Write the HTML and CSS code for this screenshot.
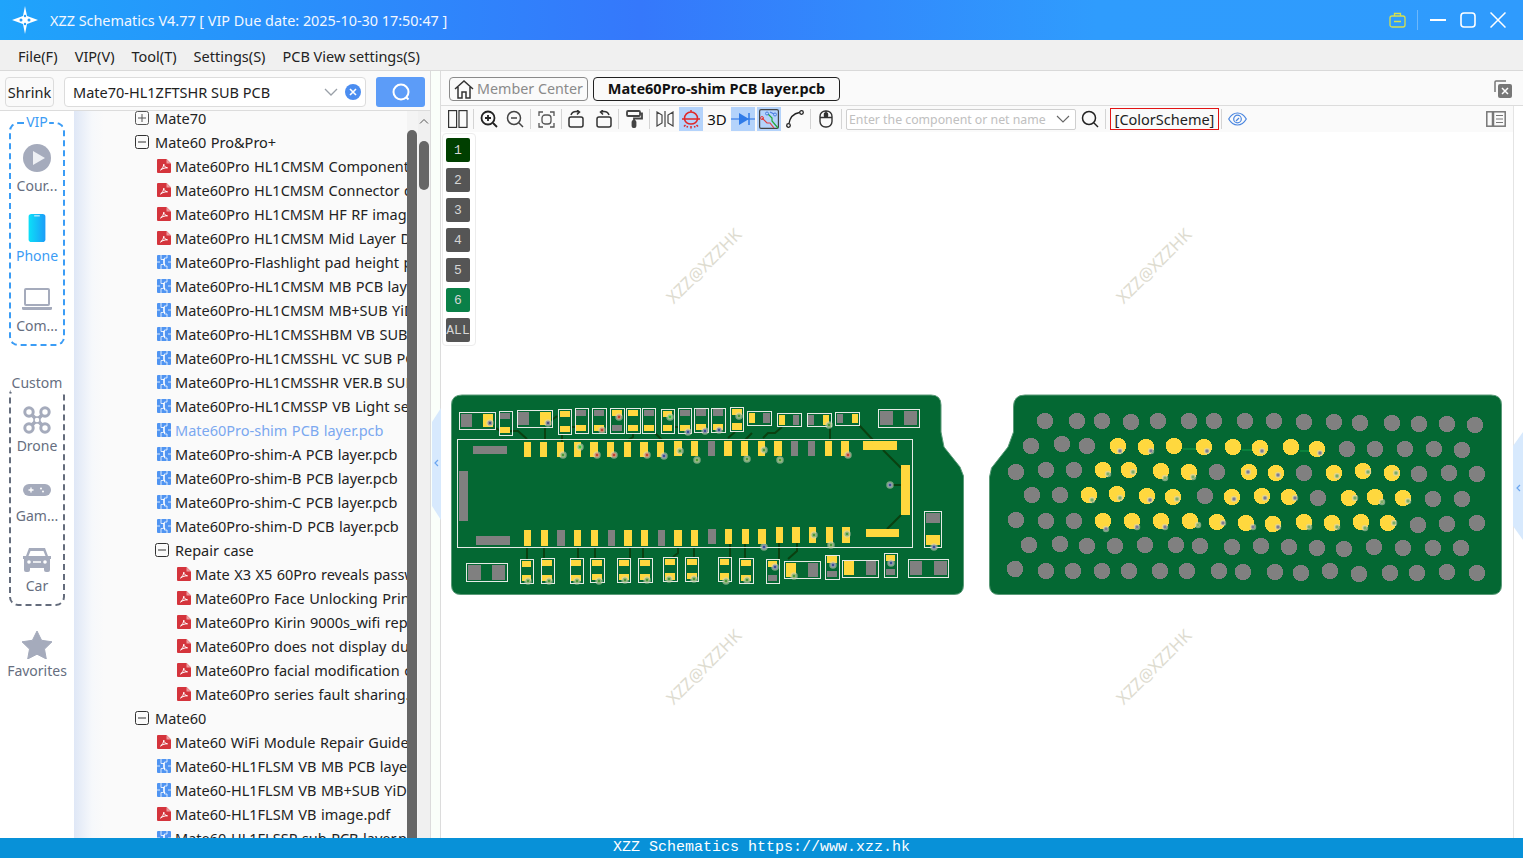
FILE: index.html
```html
<!DOCTYPE html>
<html lang="en">
<head>
<meta charset="utf-8">
<title>XZZ Schematics</title>
<link rel="stylesheet" href="styles.css">
</head>
<body>
<svg class="defs" width="0" height="0" aria-hidden="true">
  <symbol id="i-pdf" viewBox="0 0 14 14">
    <path d="M1 0h8.500L14 4.500V13a1 1 0 0 1-1 1H1a1 1 0 0 1-1-1V1a1 1 0 0 1 1-1z" fill="#d4343c"/>
    <path d="M9.500 0v4.500H14z" fill="#ee9a9e"/>
    <path d="M3.500 11c1.700-1 3-3.300 3.300-5.800.3 2 1.400 3.300 3.700 3.600-2.200-.1-4.900.6-7 2.200z" fill="none" stroke="#fff" stroke-width="1"/>
  </symbol>
  <symbol id="i-pcb" viewBox="0 0 14 14">
    <rect width="14" height="14" rx="1" fill="#4f94f2"/>
    <path d="M4 0v4.500h2.500v5H4V14M10 0v3H7.500v8H10v3M0 7h3M11 7h3" fill="none" stroke="#fff" stroke-width=".8"/>
    <circle cx="6.500" cy="4.500" r=".8" fill="#fff"/><circle cx="7.500" cy="9.500" r=".8" fill="#fff"/>
  </symbol>
  <symbol id="i-plus" viewBox="0 0 14 14">
    <rect x=".5" y=".5" width="13" height="13" rx="2" fill="none" stroke="#555"/>
    <path d="M3 7h8M7 3v8" stroke="#555"/>
  </symbol>
  <symbol id="i-minus" viewBox="0 0 14 14">
    <rect x=".5" y=".5" width="13" height="13" rx="2" fill="none" stroke="#333"/>
    <path d="M3 7h8" stroke="#333"/>
  </symbol>
</svg>

<header class="titlebar">
  <svg class="logo" width="26" height="28" viewBox="0 0 26 28">
    <path d="M13 0l2 10 11 4-11 4-2 10-2-10-11-4 11-4z" fill="#fff"/>
    <circle cx="9" cy="14" r="1.500" fill="#2a9cf6"/><circle cx="17" cy="14" r="1.500" fill="#2a9cf6"/>
    <circle cx="13" cy="10" r="1.200" fill="#2a9cf6"/><circle cx="13" cy="18" r="1.200" fill="#2a9cf6"/>
  </svg>
  <span class="apptitle">XZZ Schematics V4.77 [ VIP Due date: 2025-10-30 17:50:47 ]</span>
  <div class="winbtns">
    <svg class="brief" width="17" height="16" viewBox="0 0 17 16" fill="none" stroke="#d8e04c" stroke-width="1.300"><rect x="1" y="4" width="15" height="11" rx="2"/><path d="M5.500 4V1.500h6V4M5 9.500h7" /></svg>
    <span class="winsep"></span>
    <svg width="16" height="16" viewBox="0 0 16 16"><path d="M0 8h16" stroke="#fff" stroke-width="2"/></svg>
    <svg width="16" height="16" viewBox="0 0 16 16"><rect x="1" y="1" width="14" height="14" rx="3" fill="none" stroke="#fff" stroke-width="1.600"/></svg>
    <svg width="16" height="16" viewBox="0 0 16 16"><path d="M.5.500l15 15M15.500.500l-15 15" stroke="#fff" stroke-width="1.500"/></svg>
  </div>
</header>

<nav class="menubar">
  <span>File(F)</span><span>VIP(V)</span><span>Tool(T)</span><span>Settings(S)</span><span>PCB View settings(S)</span>
</nav>

<div class="main">
  <section class="leftpane">
    <div class="searchrow">
      <button class="shrink">Shrink</button>
      <div class="combo">
        <span class="combotext">Mate70-HL1ZFTSHR SUB PCB</span>
        <svg width="14" height="8" viewBox="0 0 14 8"><path d="M1 1l6 6 6-6" fill="none" stroke="#9aa0a8" stroke-width="1.300"/></svg>
        <svg width="16" height="16" viewBox="0 0 16 16"><circle cx="8" cy="8" r="8" fill="#4b8df0"/><path d="M5 5l6 6M11 5l-6 6" stroke="#fff" stroke-width="1.600"/></svg>
      </div>
      <button class="searchbtn" aria-label="Search"><svg width="20" height="20" viewBox="0 0 20 20" fill="none" stroke="#fff" stroke-width="2"><circle cx="10" cy="10" r="7.500"/><path d="M15.500 15.500l2 2"/></svg></button>
    </div>
    <div class="leftbody">
      <aside class="rail">
        <div class="group group-vip">
          <span class="legend legend-vip">VIP</span>
          <div class="railitem"><svg width="28" height="28" viewBox="0 0 28 28"><circle cx="14" cy="14" r="14" fill="#a5abbc"/><path d="M10 7l12 7-12 7z" fill="#eef0f4"/></svg><span>Cour...</span></div>
          <div class="railitem railitem-on"><svg width="18" height="30" viewBox="0 0 18 30"><defs><linearGradient id="ph" x1="0" x2="1" y1="0" y2="0"><stop offset="0" stop-color="#0ce0f8"/><stop offset="1" stop-color="#1c9cf8"/></linearGradient></defs><rect width="18" height="30" rx="3" fill="url(#ph)"/><path d="M6 2h6" stroke="#fff" stroke-width="1"/></svg><span>Phone</span></div>
          <div class="railitem"><svg width="30" height="28" viewBox="0 0 30 28"><rect x="3" y="5" width="24" height="16" rx="1" fill="none" stroke="#a5abbc" stroke-width="2"/><path d="M0 23h30v1.500a1.500 1.500 0 0 1-1.500 1.500h-27A1.500 1.500 0 0 1 0 24.500z" fill="#a5abbc"/></svg><span>Com...</span></div>
        </div>
        <div class="group group-custom">
          <span class="legend legend-custom">Custom</span>
          <div class="railitem"><svg width="28" height="28" viewBox="0 0 28 28" fill="none" stroke="#a5abbc"><path d="M7 7l14 14M21 7L7 21" stroke-width="3.600"/><circle cx="6" cy="6" r="4.200" stroke-width="3" fill="#fff"/><circle cx="22" cy="6" r="4.200" stroke-width="3" fill="#fff"/><circle cx="6" cy="22" r="4.200" stroke-width="3" fill="#fff"/><circle cx="22" cy="22" r="4.200" stroke-width="3" fill="#fff"/><circle cx="14" cy="14" r="3" fill="#fff" stroke-width="1.500"/></svg><span>Drone</span></div>
          <div class="railitem"><svg width="28" height="28" viewBox="0 0 28 28"><rect y="8" width="28" height="12" rx="6" fill="#a5abbc"/><path d="M5.500 14h5M8 11.500v5" stroke="#fff" stroke-width="1.300"/><circle cx="18" cy="12.500" r="1" fill="#fff"/><circle cx="20" cy="15.500" r="1" fill="#fff"/></svg><span>Gam...</span></div>
          <div class="railitem"><svg width="28" height="28" viewBox="0 0 28 28"><path d="M6 2h16l3 8h3v3h-1v11a2 2 0 0 1-2 2h-2a2 2 0 0 1-2-2v-2H7v2a2 2 0 0 1-2 2H3a2 2 0 0 1-2-2V13H0v-3h3z" fill="#a5abbc"/><path d="M7.500 5h13l2 5H5.500z" fill="#fff"/><circle cx="6" cy="16" r="1.800" fill="#fff"/><circle cx="22" cy="16" r="1.800" fill="#fff"/><path d="M10 16h8" stroke="#fff" stroke-width="1.500"/></svg><span>Car</span></div>
        </div>
        <div class="railitem railitem-fav"><svg width="30" height="28" viewBox="0 0 30 28"><path d="M15 0l4.600 9.300 10.400 1.500-7.500 7.300 1.800 9.900-9.300-4.800-9.300 4.800 1.800-9.900L0 10.800l10.400-1.500z" fill="#a5abbc" stroke="#a5abbc" stroke-linejoin="round"/></svg><span>Favorites</span></div>
      </aside>
      <div class="tree">
        <ul class="treelist">
          <li class="l1"><svg class="ic"><use href="#i-plus"/></svg>Mate70</li>
          <li class="l1"><svg class="ic"><use href="#i-minus"/></svg>Mate60 Pro&amp;Pro+</li>
          <li class="l2"><svg class="ic"><use href="#i-pdf"/></svg>Mate60Pro HL1CMSM Component diagram.pdf</li>
          <li class="l2"><svg class="ic"><use href="#i-pdf"/></svg>Mate60Pro HL1CMSM Connector diagram.pdf</li>
          <li class="l2"><svg class="ic"><use href="#i-pdf"/></svg>Mate60Pro HL1CMSM HF RF image.pdf</li>
          <li class="l2"><svg class="ic"><use href="#i-pdf"/></svg>Mate60Pro HL1CMSM Mid Layer Diagram.pdf</li>
          <li class="l2"><svg class="ic"><use href="#i-pcb"/></svg>Mate60Pro-Flashlight pad height pcb layer.pcb</li>
          <li class="l2"><svg class="ic"><use href="#i-pcb"/></svg>Mate60Pro-HL1CMSM MB PCB layer.pcb</li>
          <li class="l2"><svg class="ic"><use href="#i-pcb"/></svg>Mate60Pro-HL1CMSM MB+SUB YiDing.pcb</li>
          <li class="l2"><svg class="ic"><use href="#i-pcb"/></svg>Mate60Pro-HL1CMSSHBM VB SUB PCB layer.pcb</li>
          <li class="l2"><svg class="ic"><use href="#i-pcb"/></svg>Mate60Pro-HL1CMSSHL VC SUB PCB layer.pcb</li>
          <li class="l2"><svg class="ic"><use href="#i-pcb"/></svg>Mate60Pro-HL1CMSSHR VER.B SUB PCB layer.pcb</li>
          <li class="l2"><svg class="ic"><use href="#i-pcb"/></svg>Mate60Pro-HL1CMSSP VB Light sensor layer.pcb</li>
          <li class="l2 sel"><svg class="ic"><use href="#i-pcb"/></svg>Mate60Pro-shim PCB layer.pcb</li>
          <li class="l2"><svg class="ic"><use href="#i-pcb"/></svg>Mate60Pro-shim-A PCB layer.pcb</li>
          <li class="l2"><svg class="ic"><use href="#i-pcb"/></svg>Mate60Pro-shim-B PCB layer.pcb</li>
          <li class="l2"><svg class="ic"><use href="#i-pcb"/></svg>Mate60Pro-shim-C PCB layer.pcb</li>
          <li class="l2"><svg class="ic"><use href="#i-pcb"/></svg>Mate60Pro-shim-D PCB layer.pcb</li>
          <li class="l2b"><svg class="ic"><use href="#i-minus"/></svg>Repair case</li>
          <li class="l3"><svg class="ic"><use href="#i-pdf"/></svg>Mate X3 X5 60Pro reveals password.pdf</li>
          <li class="l3"><svg class="ic"><use href="#i-pdf"/></svg>Mate60Pro Face Unlocking Principle.pdf</li>
          <li class="l3"><svg class="ic"><use href="#i-pdf"/></svg>Mate60Pro Kirin 9000s_wifi repair.pdf</li>
          <li class="l3"><svg class="ic"><use href="#i-pdf"/></svg>Mate60Pro does not display during.pdf</li>
          <li class="l3"><svg class="ic"><use href="#i-pdf"/></svg>Mate60Pro facial modification cases.pdf</li>
          <li class="l3"><svg class="ic"><use href="#i-pdf"/></svg>Mate60Pro series fault sharing.pdf</li>
          <li class="l1"><svg class="ic"><use href="#i-minus"/></svg>Mate60</li>
          <li class="l2"><svg class="ic"><use href="#i-pdf"/></svg>Mate60 WiFi Module Repair Guide.pdf</li>
          <li class="l2"><svg class="ic"><use href="#i-pcb"/></svg>Mate60-HL1FLSM VB MB PCB layer.pcb</li>
          <li class="l2"><svg class="ic"><use href="#i-pcb"/></svg>Mate60-HL1FLSM VB MB+SUB YiDing.pcb</li>
          <li class="l2"><svg class="ic"><use href="#i-pdf"/></svg>Mate60-HL1FLSM VB image.pdf</li>
          <li class="l2"><svg class="ic"><use href="#i-pcb"/></svg>Mate60-HL1FLSSP sub PCB layer.pcb</li>
        </ul>
      </div>
      <div class="treebar"><span class="treebar-thumb"></span></div>
      <div class="outerbar">
        <svg width="10" height="6" viewBox="0 0 10 6"><path d="M1 5.500l4-4 4 4" fill="none" stroke="#555"/></svg>
        <span class="outerbar-thumb"></span>
      </div>
    </div>
  </section>

  <div class="splitter">
    <svg class="handle handle-left" width="10" height="112" viewBox="0 0 10 112"><path d="M10 0v112L1 98V14z" fill="#d7e9fd"/><path d="M7 52l-3 3 3 3" fill="none" stroke="#6aa5ef" stroke-width="1.200"/></svg>
  </div>

  <section class="rightpane">
    <div class="tabrow">
      <button class="tab tab-home">
        <svg width="20" height="20" viewBox="0 0 20 20" fill="none" stroke="#333" stroke-width="1.500"><path d="M1 10l9-8 9 8M4 8v11h4v-6h4v6h4V8"/></svg>
        <span>Member Center</span>
      </button>
      <button class="tab tab-active">Mate60Pro-shim PCB layer.pcb</button>
      <svg class="closeall" width="18" height="18" viewBox="0 0 18 18"><path d="M12 1H2a1 1 0 0 0-1 1v10" fill="none" stroke="#777" stroke-width="1.500"/><rect x="4" y="4" width="14" height="14" rx="2" fill="#777"/><path d="M8 8l6 6M14 8l-6 6" stroke="#fff" stroke-width="1.500"/></svg>
    </div>
    <div class="workarea">
      <div class="workmain">
        <div class="toolbar">
          <span class="tool"><svg width="20" height="18" viewBox="0 0 20 18" fill="none" stroke="#333" stroke-width="1.200"><rect x=".6" y=".6" width="8" height="16.800"/><rect x="11" y=".6" width="8" height="16.800"/></svg></span>
          <i class="sep"></i>
          <span class="tool"><svg width="18" height="18" viewBox="0 0 18 18" fill="none" stroke="#222" stroke-width="1.800"><circle cx="8" cy="8" r="6.500"/><path d="M13 13l4 4M5 8h6M8 5v6"/></svg></span>
          <span class="tool"><svg width="18" height="18" viewBox="0 0 18 18" fill="none" stroke="#444" stroke-width="1.500"><circle cx="8" cy="8" r="6.500"/><path d="M13 13l4 4M5 8h6"/></svg></span>
          <i class="sep"></i>
          <span class="tool"><svg width="17" height="17" viewBox="0 0 17 17" fill="none" stroke="#555" stroke-width="1.300"><path d="M1 5V1h4M12 1h4v4M16 12v4h-4M5 16H1v-4"/><rect x="4" y="4" width="9" height="9" rx="3"/></svg></span>
          <i class="sep"></i>
          <span class="tool"><svg width="18" height="18" viewBox="0 0 18 18" fill="none" stroke="#333" stroke-width="1.500"><rect x="1" y="7" width="14" height="10" rx="2"/><path d="M3 5c1-3 4-4 8-3M9 0l2.500 2L9 4.500"/></svg></span>
          <span class="tool"><svg width="18" height="18" viewBox="0 0 18 18" fill="none" stroke="#333" stroke-width="1.500"><rect x="3" y="7" width="14" height="10" rx="2"/><path d="M15 5c-1-3-4-4-8-3M9 0L6.500 2 9 4.500"/></svg></span>
          <i class="sep"></i>
          <span class="tool"><svg width="17" height="18" viewBox="0 0 17 18" fill="none" stroke="#444" stroke-width="1.800"><rect x="1" y="1" width="13" height="5" rx="1"/><path d="M14 3.500h2v5H8v3"/><rect x="6.500" y="11" width="3" height="6" rx="1" fill="#444"/></svg></span>
          <i class="sep"></i>
          <span class="tool"><svg width="18" height="16" viewBox="0 0 18 16" fill="none" stroke="#444" stroke-width="1.200"><path d="M1 1l5 3v8l-5 3zM17 1l-5 3v8l5 3zM9 0v16"/></svg></span>
          <span class="tool tool-on"><svg width="20" height="20" viewBox="0 0 20 20" fill="none" stroke="#e02828" stroke-width="1.500"><path d="M3.500 9.500a6.500 6.500 0 0 1 13 0M1 10h18M3.500 10.500c1 3 3.500 4.500 6.500 4.500s5.500-1.500 6.500-4.500M10 1v2M3 17.500l1.500-1.500M17 17.500L15.500 16M10 17v2.500M6.500 17l-.5 1.500M13.500 17l.5 1.500"/></svg></span>
          <span class="tool tool-3d">3D</span>
          <span class="tool tool-on"><svg width="24" height="16" viewBox="0 0 24 16"><path d="M0 8h24" stroke="#3a7fe8" stroke-width="1.200"/><path d="M8 2l10 6-10 6z" fill="#2f7be8"/><path d="M18 2v12" stroke="#2f7be8" stroke-width="1.500"/></svg></span>
          <span class="tool tool-on"><svg width="20" height="20" viewBox="0 0 20 20" fill="none"><rect x=".6" y=".6" width="18.800" height="18.800" rx="1.500" stroke="#444" stroke-width="1.200"/><path d="M3 9l5 5 3 0 4 5" stroke="#e04040" stroke-width="1.200"/><path d="M9 5l4 4 0 3 6 7" stroke="#22a838" stroke-width="1.200"/><path d="M11 3l4 2" stroke="#4a7de0" stroke-width="1.200"/><circle cx="8" cy="4.500" r="1.500" stroke="#4a7de0"/><circle cx="16" cy="5.500" r="1.500" stroke="#4a7de0"/><circle cx="3" cy="9" r="1.500" stroke="#e04040"/></svg></span>
          <span class="tool"><svg width="18" height="18" viewBox="0 0 18 18" fill="none" stroke="#222" stroke-width="1.300"><circle cx="2.500" cy="15.500" r="1.800"/><circle cx="15.500" cy="2.500" r="1.800"/><path d="M3 13.500C4 7 8 3.500 13.500 2.500"/></svg></span>
          <i class="sep"></i>
          <span class="tool"><svg width="14" height="18" viewBox="0 0 14 18" fill="none" stroke="#333" stroke-width="1.400"><rect x="1" y="1" width="12" height="16" rx="5.500"/><path d="M1 7.500h12M7 1v6.500"/><rect x="5.500" y="3" width="3" height="4" rx="1" fill="#333"/></svg></span>
          <i class="sep"></i>
          <div class="netinput"><span>Enter the component or net name</span><svg width="14" height="8" viewBox="0 0 14 8"><path d="M1 1l6 6 6-6" fill="none" stroke="#666" stroke-width="1.100"/></svg></div>
          <span class="tool"><svg width="18" height="18" viewBox="0 0 18 18" fill="none" stroke="#222" stroke-width="1.500"><circle cx="8" cy="8" r="6.500"/><path d="M13 13l4 4"/></svg></span>
          <i class="sep"></i>
          <span class="colorscheme">[ColorScheme]</span>
          <i class="sep"></i>
          <span class="tool"><svg width="19" height="14" viewBox="0 0 19 14" fill="none" stroke="#4a86e0" stroke-width="1.200"><path d="M.7 7C3 3 6 1 9.500 1s6.500 2 8.800 6c-2.300 4-5.300 6-8.800 6S3 11 .7 7z"/><circle cx="9.500" cy="7" r="3.800"/><path d="M8 9l3-3"/></svg></span>
          <span class="tool tool-end"><svg width="20" height="16" viewBox="0 0 20 16" fill="none" stroke="#777" stroke-width="1.500"><rect x=".8" y=".8" width="18.400" height="14.400"/><path d="M7 1v14" stroke-width="2.500"/><path d="M10 4.500h7M10 8h7M10 11.500h7" stroke-width="1.200"/></svg></span>
        </div>
        <div class="canvas">
          <div class="layers">
            <span class="layer layer-1">1</span>
            <span class="layer">2</span>
            <span class="layer">3</span>
            <span class="layer">4</span>
            <span class="layer">5</span>
            <span class="layer layer-6">6</span>
            <span class="layer">ALL</span>
          </div>
          <svg class="board" width="1072" height="706" viewBox="441 132 1072 706">
            <g class="wm">
              <text transform="translate(705 267) rotate(-45)">XZZ@XZZHK</text>
              <text transform="translate(1155 267) rotate(-45)">XZZ@XZZHK</text>
              <text transform="translate(705 668) rotate(-45)">XZZ@XZZHK</text>
              <text transform="translate(1155 668) rotate(-45)">XZZ@XZZHK</text>
            </g>

            <path class="pcb" d="M462 395H931Q941 395 941 405V432L944 447L960 467L963.500 476V585Q963.500 594.500 954 594.500H461Q451.500 594.500 451.500 585V405Q451.500 395 462 395Z"/>
            <g class="t">
              <path d="M496 428l4 3h18l9 8M545 427v12M552 420l5-4M562 434v8M571 427h4M633 433v4l-5 3M655 433l7 7M675 427h3M728 438l7-6M752 433l-7 7M763 438l5-5h7l7-6M830 428v12M859 425l14 15M883 450l18 18M901 515l-14 14M893 485h8M527 547v12M544 547v11M578 547v11M595 547v11M630 547v11M643 547v11M678 547v6l-5 4M694 547v10M730 544v13M745 544v14M779 543v16M797 543v8l-9 8"/>
            </g>
            <g class="o">
              <rect x="457.500" y="439.500" width="455" height="108"/>
              <rect x="459.500" y="412.500" width="36" height="17"/><rect x="499.500" y="411.500" width="13" height="24"/><rect x="517.500" y="410.500" width="35" height="17"/><rect x="558.500" y="409.500" width="13" height="25"/><rect x="575.500" y="408.500" width="13" height="25"/><rect x="592.500" y="408.500" width="14" height="25"/><rect x="610.500" y="408.500" width="14" height="25"/><rect x="626.500" y="408.500" width="14" height="25"/><rect x="642.500" y="408.500" width="13" height="25"/><rect x="661.500" y="409.500" width="13" height="24"/><rect x="678.500" y="408.500" width="13" height="25"/><rect x="694.500" y="408.500" width="14" height="24"/><rect x="711.500" y="408.500" width="14" height="24"/><rect x="730.500" y="407.500" width="13" height="24"/><rect x="747.500" y="411.500" width="24" height="14"/><rect x="777.500" y="413.500" width="24" height="13"/><rect x="807.500" y="413.500" width="24" height="13"/><rect x="835.500" y="412.500" width="24" height="13"/><rect x="878.500" y="409.500" width="41" height="18"/>
              <rect x="924.500" y="511.500" width="17" height="36"/>
              <rect x="466.500" y="563.500" width="41" height="18"/><rect x="520.500" y="559.500" width="13" height="24"/><rect x="541.500" y="558.500" width="13" height="25"/><rect x="570.500" y="558.500" width="13" height="25"/><rect x="590.500" y="558.500" width="14" height="24"/><rect x="617.500" y="558.500" width="13" height="24"/><rect x="638.500" y="558.500" width="14" height="24"/><rect x="663.500" y="557.500" width="14" height="24"/><rect x="685.500" y="557.500" width="13" height="24"/><rect x="718.500" y="557.500" width="13" height="24"/><rect x="739.500" y="558.500" width="14" height="25"/><rect x="766.500" y="559.500" width="13" height="24"/><rect x="784.500" y="561.500" width="36" height="17"/><rect x="825.500" y="555.500" width="14" height="24"/><rect x="842.500" y="560.500" width="36" height="17"/><rect x="884.500" y="553.500" width="13" height="24"/><rect x="908.500" y="559.500" width="40" height="18"/>
            </g>
            <g class="g">
              <rect x="461" y="414" width="11" height="13"/><rect x="500" y="413" width="10" height="6"/><rect x="518" y="412" width="11" height="13"/><rect x="576" y="410" width="10" height="6"/><rect x="594" y="410" width="10" height="6"/><rect x="612" y="425" width="10" height="6"/><rect x="644" y="410" width="10" height="6"/><rect x="680" y="410" width="10" height="6"/><rect x="696" y="409" width="10" height="7"/><rect x="713" y="409" width="10" height="7"/><rect x="763" y="413" width="7" height="10"/><rect x="793" y="415" width="6" height="10"/><rect x="808" y="415" width="6" height="10"/><rect x="837" y="414" width="6" height="9"/><rect x="880" y="411" width="13" height="14"/><rect x="904" y="411" width="13" height="14"/>
              <rect x="473" y="446" width="34" height="8"/><rect x="459" y="471" width="9" height="50"/><rect x="476" y="536" width="34" height="9"/>
              <rect x="708" y="441" width="7" height="15"/><rect x="791" y="441" width="7" height="15"/><rect x="808" y="441" width="7" height="15"/>
              <rect x="557" y="530" width="8" height="16"/><rect x="608" y="530" width="7" height="16"/><rect x="658" y="530" width="7" height="16"/><rect x="708" y="529" width="8" height="15"/>
              <rect x="926" y="513" width="14" height="10"/><rect x="468" y="565" width="13" height="15"/><rect x="492" y="565" width="13" height="15"/><rect x="768" y="575" width="9" height="6"/><rect x="808" y="563" width="10" height="14"/><rect x="827" y="571" width="10" height="6"/><rect x="866" y="561" width="10" height="14"/><rect x="886" y="569" width="9" height="6"/><rect x="910" y="561" width="12" height="14"/><rect x="934" y="561" width="13" height="14"/>
            </g>
            <g class="y">
              <rect x="483" y="414" width="10" height="13"/><rect x="500" y="427" width="10" height="6"/><rect x="540" y="412" width="11" height="13"/><rect x="560" y="411" width="10" height="6"/><rect x="560" y="426" width="10" height="6"/><rect x="576" y="425" width="10" height="6"/><rect x="594" y="425" width="10" height="6"/><rect x="612" y="410" width="10" height="6"/><rect x="628" y="410" width="10" height="6"/><rect x="628" y="425" width="10" height="6"/><rect x="644" y="425" width="10" height="6"/><rect x="663" y="411" width="9" height="6"/><rect x="663" y="425" width="9" height="6"/><rect x="680" y="425" width="10" height="6"/><rect x="696" y="424" width="10" height="6"/><rect x="713" y="424" width="10" height="6"/><rect x="732" y="409" width="10" height="6"/><rect x="732" y="423" width="10" height="7"/><rect x="749" y="413" width="6" height="10"/><rect x="779" y="415" width="6" height="10"/><rect x="823" y="415" width="6" height="10"/><rect x="852" y="414" width="6" height="9"/>
              <rect x="524" y="442" width="7" height="15"/><rect x="540" y="442" width="7" height="15"/><rect x="557" y="442" width="7" height="15"/><rect x="574" y="442" width="7" height="15"/><rect x="590" y="442" width="8" height="15"/><rect x="607" y="442" width="7" height="15"/><rect x="624" y="442" width="7" height="15"/><rect x="640" y="442" width="8" height="15"/><rect x="657" y="442" width="7" height="15"/><rect x="674" y="441" width="8" height="15"/><rect x="691" y="441" width="7" height="15"/><rect x="724" y="441" width="8" height="15"/><rect x="741" y="441" width="7" height="15"/><rect x="758" y="441" width="7" height="15"/><rect x="774" y="441" width="8" height="15"/><rect x="825" y="441" width="7" height="15"/><rect x="841" y="441" width="8" height="15"/>
              <rect x="863" y="441" width="34" height="9"/><rect x="901" y="465" width="9" height="50"/><rect x="866" y="529" width="33" height="8"/>
              <rect x="524" y="530" width="7" height="16"/><rect x="541" y="530" width="7" height="16"/><rect x="574" y="530" width="7" height="16"/><rect x="591" y="530" width="7" height="16"/><rect x="624" y="530" width="8" height="16"/><rect x="641" y="530" width="7" height="16"/><rect x="674" y="530" width="8" height="16"/><rect x="691" y="530" width="7" height="16"/><rect x="725" y="529" width="7" height="15"/><rect x="742" y="529" width="7" height="15"/><rect x="758" y="529" width="8" height="15"/><rect x="776" y="527" width="7" height="16"/><rect x="792" y="527" width="8" height="16"/><rect x="809" y="527" width="7" height="16"/><rect x="826" y="527" width="7" height="16"/><rect x="842" y="527" width="8" height="16"/>
              <rect x="926" y="535" width="14" height="10"/>
              <rect x="522" y="561" width="9" height="6"/><rect x="522" y="575" width="9" height="6"/><rect x="542" y="560" width="10" height="6"/><rect x="542" y="575" width="10" height="6"/><rect x="571" y="560" width="10" height="6"/><rect x="571" y="575" width="10" height="6"/><rect x="592" y="560" width="10" height="6"/><rect x="592" y="574" width="10" height="6"/><rect x="619" y="560" width="10" height="6"/><rect x="619" y="574" width="10" height="6"/><rect x="640" y="560" width="10" height="6"/><rect x="640" y="574" width="10" height="6"/><rect x="665" y="559" width="10" height="6"/><rect x="665" y="573" width="10" height="7"/><rect x="687" y="559" width="10" height="6"/><rect x="687" y="573" width="10" height="6"/><rect x="720" y="559" width="9" height="6"/><rect x="720" y="573" width="9" height="7"/><rect x="741" y="560" width="10" height="6"/><rect x="741" y="575" width="10" height="6"/><rect x="768" y="561" width="9" height="6"/><rect x="786" y="563" width="10" height="14"/><rect x="827" y="556" width="10" height="7"/><rect x="844" y="561" width="10" height="14"/><rect x="886" y="555" width="9" height="6"/>
            </g>
            <g class="v">
              <circle class="vn" cx="490" cy="423" r="2.500"/><circle class="vn" cx="548" cy="423" r="2.500"/><circle class="vr" cx="602" cy="430" r="2.500"/><circle class="vr" cx="619" cy="417" r="2.500"/><circle class="vl" cx="670" cy="417" r="2.500"/><circle class="vb" cx="688" cy="432" r="2.500"/><circle class="vb" cx="705" cy="431" r="2.500"/><circle class="vb" cx="719" cy="430" r="2.500"/><circle class="vg" cx="739" cy="416" r="2.500"/><circle class="vg" cx="829" cy="425" r="2.500"/>
              <circle class="vg" cx="563" cy="455" r="2.500"/><circle class="vl" cx="580" cy="447" r="2.500"/><circle class="vr" cx="597" cy="455" r="2.500"/><circle class="vr" cx="614" cy="455" r="2.500"/><circle class="vr" cx="647" cy="455" r="2.500"/><circle class="vb" cx="664" cy="456" r="2.500"/><circle class="vg" cx="680" cy="451" r="2.500"/><circle class="vg" cx="697" cy="460" r="2.500"/><circle class="vg" cx="747" cy="459" r="2.500"/><circle class="vg" cx="764" cy="450" r="2.500"/><circle class="vg" cx="780" cy="460" r="2.500"/><circle class="vr" cx="848" cy="455" r="2.500"/><circle class="vb" cx="890" cy="485" r="2.500"/><circle class="vb" cx="764" cy="547" r="2.500"/><circle class="vg" cx="814" cy="535" r="2.500"/><circle class="vg" cx="831" cy="545" r="2.500"/><circle class="vg" cx="847" cy="534" r="2.500"/>
              <circle class="vb" cx="934" cy="547" r="2.500"/><circle class="vg" cx="528" cy="581" r="2.500"/><circle class="vg" cx="549" cy="581" r="2.500"/><circle class="vg" cx="577" cy="581" r="2.500"/><circle class="vg" cx="599" cy="581" r="2.500"/><circle class="vg" cx="625" cy="580" r="2.500"/><circle class="vg" cx="647" cy="580" r="2.500"/><circle class="vg" cx="669" cy="579" r="2.500"/><circle class="vg" cx="694" cy="579" r="2.500"/><circle class="vg" cx="726" cy="581" r="2.500"/><circle class="vg" cx="747" cy="580" r="2.500"/><circle class="vb" cx="775" cy="567" r="2.500"/><circle class="vg" cx="794" cy="576" r="2.500"/><circle class="vb" cx="833" cy="565" r="2.500"/><circle class="vb" cx="891" cy="563" r="2.500"/>
            </g>

            <path class="pcb" d="M1025 395H1491Q1501.500 395 1501.500 405V585Q1501.500 594.500 1492 594.500H999Q989.500 594.500 989.500 585V477L991.500 468L1008 447L1013.500 432V407Q1013.500 395 1025 395Z"/>
            <path class="trace2" d="M1183 449h14M1242 450h10M1300 451h9"/>
            <g class="g">
              <circle cx="1045" cy="421" r="8.300"/><circle cx="1077" cy="421" r="8.300"/><circle cx="1102" cy="421" r="8.300"/><circle cx="1131" cy="422" r="8.300"/><circle cx="1158" cy="421" r="8.300"/><circle cx="1189" cy="421" r="8.300"/><circle cx="1214" cy="421" r="8.300"/><circle cx="1245" cy="421" r="8.300"/><circle cx="1274" cy="421" r="8.300"/><circle cx="1304" cy="422" r="8.300"/><circle cx="1334" cy="422" r="8.300"/><circle cx="1360" cy="423" r="8.300"/><circle cx="1392" cy="423" r="8.300"/><circle cx="1419" cy="424" r="8.300"/><circle cx="1447" cy="424" r="8.300"/><circle cx="1475" cy="425" r="8.300"/>
              <circle cx="1031" cy="446" r="8.300"/><circle cx="1062" cy="444" r="8.300"/><circle cx="1087" cy="446" r="8.300"/><circle cx="1347" cy="449" r="8.300"/><circle cx="1375" cy="449" r="8.300"/><circle cx="1405" cy="449" r="8.300"/><circle cx="1434" cy="449" r="8.300"/><circle cx="1462" cy="450" r="8.300"/>
              <circle cx="1016" cy="472" r="8.300"/><circle cx="1046" cy="470" r="8.300"/><circle cx="1074" cy="470" r="8.300"/><circle cx="1217" cy="472" r="8.300"/><circle cx="1304" cy="473" r="8.300"/><circle cx="1419" cy="474" r="8.300"/><circle cx="1449" cy="473" r="8.300"/><circle cx="1477" cy="474" r="8.300"/>
              <circle cx="1032" cy="495" r="8.300"/><circle cx="1060" cy="495" r="8.300"/><circle cx="1205" cy="496" r="8.300"/><circle cx="1318" cy="498" r="8.300"/><circle cx="1433" cy="499" r="8.300"/><circle cx="1462" cy="499" r="8.300"/>
              <circle cx="1016" cy="520" r="8.300"/><circle cx="1046" cy="521" r="8.300"/><circle cx="1074" cy="521" r="8.300"/><circle cx="1418" cy="525" r="8.300"/><circle cx="1447" cy="524" r="8.300"/><circle cx="1477" cy="523" r="8.300"/>
              <circle cx="1029" cy="545" r="8.300"/><circle cx="1060" cy="544" r="8.300"/><circle cx="1087" cy="546" r="8.300"/><circle cx="1115" cy="546" r="8.300"/><circle cx="1145" cy="545" r="8.300"/><circle cx="1176" cy="545" r="8.300"/><circle cx="1200" cy="546" r="8.300"/><circle cx="1232" cy="547" r="8.300"/><circle cx="1261" cy="546" r="8.300"/><circle cx="1289" cy="547" r="8.300"/><circle cx="1317" cy="548" r="8.300"/><circle cx="1344" cy="549" r="8.300"/><circle cx="1374" cy="547" r="8.300"/><circle cx="1403" cy="548" r="8.300"/><circle cx="1433" cy="548" r="8.300"/><circle cx="1461" cy="548" r="8.300"/>
              <circle cx="1015" cy="569" r="8.300"/><circle cx="1046" cy="571" r="8.300"/><circle cx="1073" cy="571" r="8.300"/><circle cx="1102" cy="571" r="8.300"/><circle cx="1129" cy="571" r="8.300"/><circle cx="1160" cy="571" r="8.300"/><circle cx="1187" cy="571" r="8.300"/><circle cx="1219" cy="571" r="8.300"/><circle cx="1243" cy="572" r="8.300"/><circle cx="1275" cy="572" r="8.300"/><circle cx="1301" cy="573" r="8.300"/><circle cx="1330" cy="571" r="8.300"/><circle cx="1359" cy="574" r="8.300"/><circle cx="1390" cy="573" r="8.300"/><circle cx="1417" cy="573" r="8.300"/><circle cx="1447" cy="572" r="8.300"/><circle cx="1477" cy="573" r="8.300"/>
            </g>
            <g class="y">
              <circle cx="1118" cy="446" r="8.300"/><circle cx="1146" cy="447" r="8.300"/><circle cx="1174" cy="446" r="8.300"/><circle cx="1204" cy="447" r="8.300"/><circle cx="1233" cy="447" r="8.300"/><circle cx="1260" cy="448" r="8.300"/><circle cx="1291" cy="447" r="8.300"/><circle cx="1317" cy="449" r="8.300"/>
              <circle cx="1103" cy="470" r="8.300"/><circle cx="1129" cy="470" r="8.300"/><circle cx="1161" cy="471" r="8.300"/><circle cx="1189" cy="472" r="8.300"/><circle cx="1249" cy="472" r="8.300"/><circle cx="1276" cy="473" r="8.300"/><circle cx="1334" cy="473" r="8.300"/><circle cx="1363" cy="471" r="8.300"/><circle cx="1392" cy="473" r="8.300"/>
              <circle cx="1089" cy="495" r="8.300"/><circle cx="1117" cy="494" r="8.300"/><circle cx="1147" cy="496" r="8.300"/><circle cx="1173" cy="497" r="8.300"/><circle cx="1232" cy="497" r="8.300"/><circle cx="1262" cy="496" r="8.300"/><circle cx="1289" cy="497" r="8.300"/><circle cx="1349" cy="498" r="8.300"/><circle cx="1375" cy="497" r="8.300"/><circle cx="1403" cy="498" r="8.300"/>
              <circle cx="1103" cy="521" r="8.300"/><circle cx="1132" cy="521" r="8.300"/><circle cx="1161" cy="521" r="8.300"/><circle cx="1190" cy="521" r="8.300"/><circle cx="1217" cy="522" r="8.300"/><circle cx="1246" cy="523" r="8.300"/><circle cx="1273" cy="524" r="8.300"/><circle cx="1304" cy="522" r="8.300"/><circle cx="1332" cy="523" r="8.300"/><circle cx="1361" cy="522" r="8.300"/><circle cx="1388" cy="523" r="8.300"/>
            </g>
            <g class="v">
              <circle class="vn" cx="1120" cy="451" r="2"/><circle class="vn" cx="1151" cy="451" r="2"/><circle class="vn" cx="1207" cy="451" r="2"/><circle class="vn" cx="1262" cy="451" r="2"/><circle class="vn" cx="1320" cy="453" r="2"/>
              <circle class="vg" cx="1108" cy="474" r="2"/><circle class="vg" cx="1133" cy="472" r="2"/><circle class="vg" cx="1165" cy="478" r="2"/><circle class="vg" cx="1193" cy="477" r="2"/><circle class="vn" cx="1248" cy="472" r="2"/><circle class="vn" cx="1278" cy="475" r="2"/><circle class="vg" cx="1337" cy="476" r="2"/><circle class="vg" cx="1368" cy="472" r="2"/><circle class="vg" cx="1396" cy="473" r="2"/>
              <circle class="vg" cx="1092" cy="500" r="2"/><circle class="vg" cx="1120" cy="498" r="2"/><circle class="vn" cx="1150" cy="500" r="2"/><circle class="vg" cx="1177" cy="499" r="2"/><circle class="vn" cx="1234" cy="499" r="2"/><circle class="vn" cx="1265" cy="498" r="2"/><circle class="vn" cx="1295" cy="498" r="2"/><circle class="vg" cx="1355" cy="498" r="2"/><circle class="vg" cx="1382" cy="502" r="2"/><circle class="vg" cx="1408" cy="501" r="2"/>
              <circle class="vn" cx="1106" cy="529" r="2"/><circle class="vn" cx="1137" cy="527" r="2"/><circle class="vn" cx="1165" cy="527" r="2"/><circle class="vg" cx="1198" cy="525" r="2"/><circle class="vn" cx="1223" cy="523" r="2"/><circle class="vn" cx="1253" cy="527" r="2"/><circle class="vn" cx="1278" cy="527" r="2"/><circle class="vg" cx="1309" cy="527" r="2"/><circle class="vg" cx="1337" cy="527" r="2"/><circle class="vg" cx="1365" cy="528" r="2"/><circle class="vg" cx="1394" cy="523" r="2"/>
            </g>
          </svg>
        </div>
      </div>
      <div class="sidestrip">
        <svg class="handle handle-right" width="10" height="108" viewBox="0 0 10 108"><path d="M10 0v108L0 94V14z" fill="#d7e9fd"/><path d="M7 53l-3 3 3 3" fill="none" stroke="#6aa5ef" stroke-width="1.200"/></svg>
      </div>
    </div>
  </section>
</div>

<footer class="statusbar">XZZ Schematics https://www.xzz.hk</footer>
</body>
</html>
```

FILE: styles.css
```css
* { box-sizing: border-box; }
html, body { margin: 0; height: 100%; }
body {
  width: 1523px;
  height: 858px;
  display: flex;
  flex-direction: column;
  overflow: hidden;
  font-family: "Noto Sans", "Open Sans", sans-serif;
  font-size: 14.5px;
  color: #222;
  background: #fff;
}
.defs { position: absolute; }

.titlebar {
  height: 40px;
  flex: none;
  display: flex;
  align-items: center;
  padding-left: 12px;
  color: #fff;
  background: linear-gradient(90deg, #1fa4fb 0%, #3578fb 42%, #2f9cfd 72%, #2f9bfd 100%);
}
.apptitle { margin-left: 12px; font-size: 14.4px; color: #f2f7ff; }
.winbtns { margin-left: auto; display: flex; align-items: center; gap: 14px; padding-right: 17px; }
.brief { margin-right: -3px; }
.winsep { width: 1px; height: 20px; margin-right: -2px; background: #6db8fb; }

.menubar {
  height: 31px;
  flex: none;
  display: flex;
  align-items: center;
  gap: 17px;
  padding: 2px 0 0 18px;
  background: #f0f0f0;
  border-bottom: 1px solid #d9d9d9;
}

.main { flex: 1; display: flex; min-height: 0; }

.leftpane { width: 431px; flex: none; display: flex; flex-direction: column; border-right: 1px solid #dcdcdc; }
.searchrow {
  height: 40px;
  flex: none;
  display: flex;
  align-items: flex-start;
  padding: 6px 0 0 5px;
  background: #fafafa;
  border-bottom: 1px solid #dcdcdc;
}
.shrink {
  width: 49px;
  height: 30px;
  padding: 0;
  font: inherit;
  color: #222;
  background: #fafafa;
  border: 1px solid #dcdcdc;
  border-radius: 4px;
}
.combo {
  width: 302px;
  height: 30px;
  margin-left: 10px;
  padding: 0 4px 0 8px;
  display: flex;
  align-items: center;
  gap: 7px;
  background: #fff;
  border: 1px solid #dcdcdc;
  border-radius: 4px;
}
.combotext { flex: 1; }
.searchbtn {
  width: 49px;
  height: 30px;
  margin-left: 10px;
  padding: 0;
  display: flex;
  align-items: center;
  justify-content: center;
  background: #5c9cf8;
  border: 0;
  border-radius: 3px;
}

.leftbody { flex: 1; display: flex; min-height: 0; }
.rail {
  width: 74px;
  flex: none;
  padding: 11px 0 0 9px;
  background: #fff;
}
.group {
  position: relative;
  width: 56px;
  margin-bottom: 25px;
  display: flex;
  flex-direction: column;
  border: 2px dashed #646c7c;
  border-radius: 9px;
}
.group-vip { height: 224px; padding-top: 20px; gap: 18px; margin-bottom: 40px; border-color: #3b9cf5; }
.group-custom { height: 220px; padding-top: 18px; gap: 20px; }
.legend {
  position: absolute;
  top: -12px;
  left: 50%;
  transform: translateX(-50%);
  padding: 0 1px;
  background: #fff;
  color: #666e80;
  font-size: 14px;
  white-space: nowrap;
}
.legend-vip { color: #3b9cf5; }
.legend-custom { top: -15px; }
.railitem {
  width: 52px;
  height: 50px;
  display: flex;
  flex-direction: column;
  align-items: center;
  color: #666e80;
  font-size: 14px;
  line-height: 20px;
  white-space: nowrap;
}
.railitem svg { height: 28px; margin-bottom: 2px; flex: none; }
.group-vip .railitem { height: 52px; }
.group-vip .railitem svg { margin-bottom: 4px; }
.railitem-on { color: #3b9cf5; }
.railitem-fav { width: 56px; }

.tree {
  width: 333px;
  flex: none;
  overflow: hidden;
  background: linear-gradient(90deg, #dfe7f6 0, #f6f8fb 18px, #fafafa 30px);
}
.treelist { list-style: none; margin: -5px 0 0; padding: 0; word-spacing: .7px; }
.treelist li {
  height: 24px;
  display: flex;
  align-items: center;
  white-space: nowrap;
  color: #222;
}
.ic { width: 14px; height: 14px; flex: none; margin-right: 4px; }
.l1 { padding-left: 61px; }
.l1 .ic { margin-right: 6px; }
.l2 { padding-left: 83px; }
.l2b { padding-left: 81px; }
.l2b .ic { margin-right: 6px; }
.l3 { padding-left: 103px; }
.treelist .sel { color: #7ba8f0; }

.treebar { width: 11px; flex: none; background: #f4f4f4; padding-top: 19px; overflow: hidden; }
.treebar-thumb { display: block; width: 10px; height: 760px; border-radius: 5px; background: #666; }
.outerbar {
  width: 12px;
  flex: none;
  background: #f0f0f0;
  display: flex;
  flex-direction: column;
  align-items: center;
  padding-top: 7px;
}
.outerbar-thumb { display: block; width: 10px; height: 49px; margin-top: 17px; border-radius: 5px; background: #666; }

.splitter { width: 10px; flex: none; position: relative; background: #fafffa; border-right: 1px solid #dcdcdc; }
.handle { position: absolute; display: block; }
.handle-left { left: 0; top: 337px; }
.handle-right { right: 0; top: 326px; }

.rightpane { flex: 1; min-width: 0; display: flex; flex-direction: column; }
.tabrow {
  height: 35px;
  flex: none;
  display: flex;
  align-items: flex-start;
  padding: 6px 0 0 8px;
  gap: 5px;
  background: #fafafa;
  border-bottom: 1px solid #dcdcdc;
}
.tab {
  height: 24px;
  padding: 0 0 2px;
  font: inherit;
  display: flex;
  align-items: center;
  justify-content: center;
  border-radius: 4px;
  background: #fafafa;
}
.tab svg { margin-top: 2px; }
.tab-home { width: 139px; gap: 3px; font-size: 14.3px; color: #8a8a8a; border: 1px solid #8a8a8a; }
.tab-active { width: 247px; font-weight: 700; color: #111; border: 1px solid #222; }
.closeall { margin: 3px 11px 0 auto; }

.workarea { flex: 1; display: flex; min-height: 0; }
.workmain { width: 1072px; flex: none; display: flex; flex-direction: column; }
.sidestrip { flex: 1; position: relative; border-left: 1px solid #e4e4e4; background: #fff; }

.toolbar {
  height: 26px;
  flex: none;
  display: flex;
  align-items: center;
  gap: 2px;
  padding: 0 5px;
  background: #fafafa;
}
.tool { width: 24px; height: 24px; flex: none; display: flex; align-items: center; justify-content: center; font-size: 15.500px; color: #111; }
.tool-on { background: #b4d3fb; }
.tool-3d { font-size: 15px; }
.tool-end { margin-left: auto; }
.sep { width: 1px; height: 20px; margin: 0 1px; flex: none; background: #d4d4d4; }
.netinput {
  width: 230px;
  height: 21px;
  margin-left: 1px;
  padding: 0 5px 0 2px;
  display: flex;
  align-items: center;
  justify-content: space-between;
  background: #fff;
  border: 1px solid #cfcfcf;
  border-radius: 2px;
  color: #c0c0c0;
  font-size: 12.3px;
}
.colorscheme {
  width: 109px;
  height: 22px;
  margin: 0 -1px 0 1px;
  display: flex;
  align-items: center;
  justify-content: center;
  border: 1.500px solid #e21414;
  color: #222;
}

.canvas { flex: 1; position: relative; min-height: 0; background: #fff; }
.board { display: block; }
.layers {
  position: absolute;
  left: 1px;
  top: 1px;
  width: 34px;
  padding: 4px 0 3px 3px;
  display: flex;
  flex-direction: column;
  gap: 6px;
  background: #fff;
  border: 1px solid #ececec;
  border-radius: 4px;
  z-index: 1;
}
.layer {
  width: 24px;
  height: 24px;
  display: flex;
  align-items: center;
  justify-content: center;
  border-radius: 2px;
  background: #555;
  color: #d6d6d6;
  font: 13px "Liberation Mono", monospace;
}
.layer-1 { background: #003f00; }
.layer-6 { background: #0a8048; }

.wm text { font: 17px "Noto Sans", sans-serif; fill: #dedcd0; text-anchor: middle; dominant-baseline: middle; }
.pcb { fill: #046833; stroke: #5a9a78; stroke-width: 1; }
.t { fill: none; stroke: #0a4010; stroke-width: 2; }
.trace2 { fill: none; stroke: #0b8a42; stroke-width: 1.500; }
.o rect { fill: none; stroke: #e6ebe6; stroke-width: 1; }
.g { fill: #808080; shape-rendering: crispEdges; }
.y { fill: #ffd83e; shape-rendering: crispEdges; }
.v circle { stroke: rgba(214, 214, 190, .55); stroke-width: 2.500; }
.vg { fill: #4e9a3a; }
.vl { fill: #3fc23a; }
.vr { fill: #c2452f; }
.vb { fill: #3c4f96; }
.vn { fill: #50507e; }

.statusbar {
  height: 20px;
  flex: none;
  text-align: center;
  background: #0891d8;
  color: #fff;
  font: 15px/20px "Liberation Mono", monospace;
}
```
